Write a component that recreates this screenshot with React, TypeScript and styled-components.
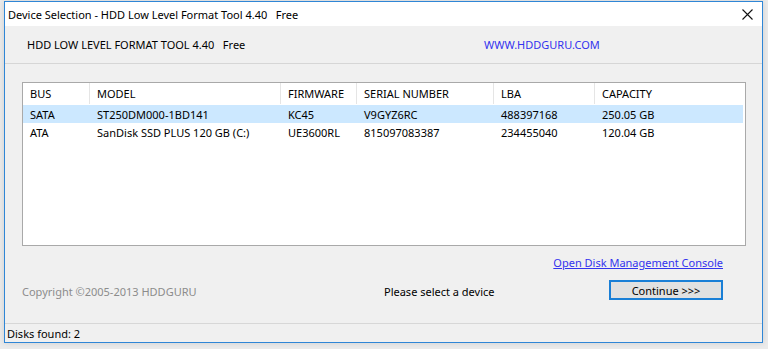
import React from "react";
import styled, { createGlobalStyle } from "styled-components";

const GlobalStyle = createGlobalStyle`
  html, body {
    margin: 0;
    padding: 0;
    background: #ebebeb;
    font-family: "Noto Sans", "Open Sans", sans-serif;
    font-size: 11px;
    color: #000;
  }
`;

const disks = [
  { bus: "SATA", model: "ST250DM000-1BD141", fw: "KC45", serial: "V9GYZ6RC", lba: "488397168", cap: "250.05 GB" },
  { bus: "ATA", model: "SanDisk SSD PLUS 120 GB (C:)", fw: "UE3600RL", serial: "815097083387", lba: "234455040", cap: "120.04 GB" },
];

const columns = ["BUS", "MODEL", "FIRMWARE", "SERIAL NUMBER", "LBA", "CAPACITY"];

function App() {
  return (
    <>
      <GlobalStyle />
      <Page>
        <Window>
          <TitleBar>
            <Title>Device Selection - HDD Low Level Format Tool 4.40&nbsp;&nbsp;&nbsp;Free</Title>
            <CloseBtn>
              <svg width="11" height="11" viewBox="0 0 11 11">
                <path d="M0.5 0.5 L10.5 10.5 M10.5 0.5 L0.5 10.5" stroke="#111" strokeWidth="1.1" />
              </svg>
            </CloseBtn>
          </TitleBar>
          <Header>
            <AppName>HDD LOW LEVEL FORMAT TOOL 4.40&nbsp;&nbsp;&nbsp;Free</AppName>
            <SiteLink>WWW.HDDGURU.COM</SiteLink>
          </Header>
          <Body>
            <Table>
              <HeadRow>
                {columns.map((c, i) => (
                  <HeadCell key={c} $last={i === columns.length - 1}>{c}</HeadCell>
                ))}
              </HeadRow>
              {disks.map((d, i) => (
                <Row key={d.serial} $selected={i === 0}>
                  <Cell>{d.bus}</Cell>
                  <Cell>{d.model}</Cell>
                  <Cell>{d.fw}</Cell>
                  <Cell>{d.serial}</Cell>
                  <Cell>{d.lba}</Cell>
                  <Cell>{d.cap}</Cell>
                </Row>
              ))}
            </Table>
            <LinkRow>
              <ConsoleLink>Open Disk Management Console</ConsoleLink>
            </LinkRow>
            <Footer>
              <Copyright>Copyright ©2005-2013 HDDGURU</Copyright>
              <Hint>Please select a device</Hint>
              <Button>Continue &gt;&gt;&gt;</Button>
            </Footer>
          </Body>
          <StatusBar>Disks found: 2</StatusBar>
        </Window>
      </Page>
    </>
  );
}

export default App;

const Page = styled.div`
  width: 768px;
  height: 349px;
  padding: 1px 0 0 4px;
  box-sizing: border-box;
`;

const Window = styled.div`
  width: 759px;
  height: 342px;
  box-sizing: border-box;
  border: 1px solid #2f86d6;
  background: #f0f0f0;
  display: flex;
  flex-direction: column;
  box-shadow: 0 0 6px rgba(0, 0, 0, 0.12);
`;

const TitleBar = styled.div`
  height: 24px;
  background: #fff;
  display: flex;
  align-items: center;
  justify-content: space-between;
  padding: 0 8px 0 3px;
`;

const Title = styled.span`
  font-size: 11px;
  line-height: 1;
  white-space: pre;
`;

const CloseBtn = styled.span`
  display: flex;
  align-items: center;
  padding-right: 1px;
`;

const Header = styled.div`
  height: 38px;
  display: flex;
  align-items: center;
  border-bottom: 1px solid #d6d6d6;
  box-sizing: border-box;
  padding-left: 22px;
`;

const AppName = styled.span`
  width: 457px;
  white-space: pre;
`;

const SiteLink = styled.span`
  color: #3333ee;
`;

const Body = styled.div`
  flex: 1;
  padding: 18px 16px 0 17px;
  display: flex;
  flex-direction: column;
`;

const Table = styled.div`
  height: 164px;
  box-sizing: border-box;
  border: 1px solid #a9a9a9;
  background: #fff;
  padding-right: 2px;
`;

const grid = `
  display: grid;
  grid-template-columns: 67px 191px 76px 137px 101px 1fr;
`;

const HeadRow = styled.div`
  ${grid}
  height: 21px;
  margin-bottom: 1px;
`;

const HeadCell = styled.div<{ $last?: boolean }>`
  display: flex;
  align-items: center;
  padding-left: 7px;
  border-right: ${(p) => (p.$last ? "none" : "1px solid #e5e5e5")};
`;

const Row = styled.div<{ $selected?: boolean }>`
  ${grid}
  height: 18px;
  background: ${(p) => (p.$selected ? "#cce8ff" : "transparent")};
`;

const Cell = styled.div`
  display: flex;
  align-items: center;
  padding-left: 7px;
  white-space: nowrap;
`;

const LinkRow = styled.div`
  display: flex;
  justify-content: flex-end;
  padding: 9px 23px 0 0;
  height: 17px;
`;

const ConsoleLink = styled.span`
  color: #3333ee;
  text-decoration: underline;
`;

const Footer = styled.div`
  display: flex;
  align-items: center;
  margin-top: 8px;
  padding-right: 23px;
`;

const Copyright = styled.span`
  color: #8c8c8c;
  width: 362px;
  padding-top: 3px;
`;

const Hint = styled.span`
  flex: 1;
  padding-top: 3px;
`;

const Button = styled.div`
  width: 114px;
  height: 20px;
  box-sizing: border-box;
  border: 2px solid #1a7fd6;
  background: #e1e1e1;
  display: flex;
  align-items: center;
  justify-content: center;
`;

const StatusBar = styled.div`
  height: 18px;
  border-top: 1px solid #d7d7d7;
  display: flex;
  align-items: center;
  padding-left: 2px;
`;
